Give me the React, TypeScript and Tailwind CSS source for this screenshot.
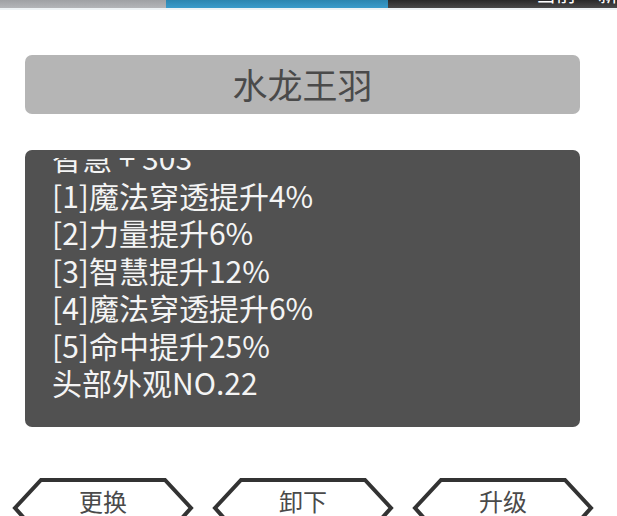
import React from "react";

const font = { fontFamily: '"Noto Sans CJK SC", "Noto Sans", sans-serif' };

function HexButton({ label }: { label: string }) {
  return (
    <div className="relative w-[182px] h-[64px] shrink-0">
      <svg className="absolute inset-0" width="182" height="64" viewBox="0 0 182 64">
        <polygon
          points="29,4 153,4 179,32 153,61 29,61 3,32"
          fill="white"
          stroke="#333333"
          strokeWidth="4"
          strokeLinejoin="miter"
        />
      </svg>
      <div className="relative flex h-[48px] items-center justify-center pt-[2px] text-[24px] leading-none text-[#4a4a4a]">
        {label}
      </div>
    </div>
  );
}

export default function App() {
  const lines = [
    "智慧 + 303",
    "[1]魔法穿透提升4%",
    "[2]力量提升6%",
    "[3]智慧提升12%",
    "[4]魔法穿透提升6%",
    "[5]命中提升25%",
    "头部外观NO.22",
  ];
  return (
    <div className="relative h-[516px] w-[617px] overflow-hidden bg-white" style={font}>
      {/* top bar */}
      <div className="flex h-[8px] w-full overflow-hidden">
        <div className="h-full w-[166px] bg-gradient-to-b from-[#9fa1a4] to-[#b3b5b8]" />
        <div className="h-full w-[222px] bg-gradient-to-b from-[#2c86b0] to-[#3a9ccb]" />
        <div className="relative h-full flex-1 bg-gradient-to-b from-[#2a2a2a] to-[#4a4a4a]">
          <div className="absolute top-[-16px] text-[20px] leading-none text-white" style={{ left: 148 }}>
            当前
          </div>
          <div className="absolute top-[-16px] text-[20px] leading-none text-white" style={{ left: 210 }}>
            新
          </div>
        </div>
      </div>
      <div className="h-[2px] w-full bg-[#eef3f5]" />

      {/* title */}
      <div className="ml-[25px] mt-[45px] flex h-[59px] w-[555px] items-center justify-center rounded-[7px] bg-[#b5b5b5]">
        <span className="mb-[3px] text-[35px] leading-none text-[#4a4a4a]">水龙王羽</span>
      </div>

      {/* info panel */}
      <div className="ml-[25px] mt-[36px] h-[277px] w-[555px] rounded-[7px] bg-[#515151] pt-[8px]">
        <div className="h-[262px] overflow-hidden">
          <div className="mt-[-19px] pl-[27px] text-[30px] leading-[37.5px] text-[#f4f4f4]">
            {lines.map((l) => (
              <div key={l} className="whitespace-nowrap">
                {l}
              </div>
            ))}
          </div>
        </div>
      </div>

      {/* buttons */}
      <div className="mt-[49px] flex gap-[18px] pl-[12px]">
        <HexButton label="更换" />
        <HexButton label="卸下" />
        <HexButton label="升级" />
      </div>
    </div>
  );
}
